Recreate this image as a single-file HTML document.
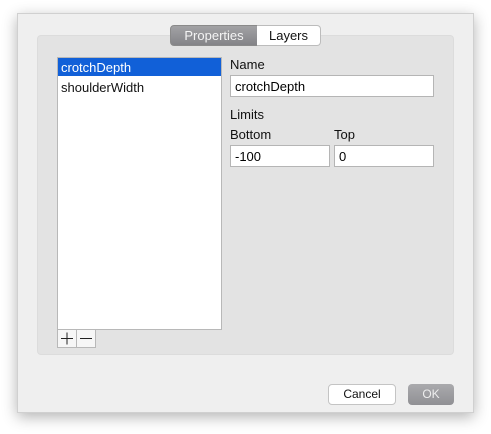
<!DOCTYPE html><html><head><style>
body{margin:0;width:491px;height:434px;background:#fff;font-family:"Liberation Sans",sans-serif;font-size:13px;position:relative;overflow:hidden}
.a{position:absolute;box-sizing:border-box}
.win{left:17px;top:13px;width:457px;height:400px;background:#efefef;border:1px solid #d0d0d0;box-shadow:0 4px 14px rgba(0,0,0,.3)}
.panel{left:37px;top:35px;width:417px;height:320px;background:#e3e3e3;border:1px solid #dcdcdc;border-radius:4px}
.t{line-height:15px;color:#111}
.fld{background:#fff;border:1px solid #b5b5b5;padding:3px 4px;line-height:15px}
</style></head><body>
<div class="a win"></div>
<div class="a panel"></div>
<div class="a" style="left:170px;top:25px;width:88px;height:21px;background:linear-gradient(#a2a2a5,#848488);border:1px solid #8a8a8a;border-radius:4px 0 0 4px;color:#f4f4f4;text-align:center;line-height:19px">Properties</div>
<div class="a" style="left:257px;top:25px;width:64px;height:21px;background:#fff;border:1px solid #bcbcbc;border-left:none;border-radius:0 4px 4px 0;color:#111;text-align:center;line-height:19px">Layers</div>
<div class="a" style="left:57px;top:57px;width:165px;height:273px;background:#fff;border:1px solid #b8b8b8"></div>
<div class="a" style="left:58px;top:58px;width:163px;height:18px;background:#1160d8;color:#fff;padding-left:3px;line-height:20px">crotchDepth</div>
<div class="a t" style="left:61px;top:80px">shoulderWidth</div>
<div class="a" style="left:57px;top:329px;width:20px;height:19px;background:#f6f6f6;border:1px solid #b8b8b8"><svg width="18" height="17" style="position:absolute;left:0;top:0"><path d="M3 8.5H15M9 2.5V14.5" stroke="#222" stroke-width="1"/></svg></div>
<div class="a" style="left:76px;top:329px;width:20px;height:19px;background:#f6f6f6;border:1px solid #b8b8b8"><svg width="18" height="17" style="position:absolute;left:0;top:0"><path d="M3 8.5H15" stroke="#222" stroke-width="1"/></svg></div>
<div class="a t" style="left:230px;top:57px">Name</div>
<div class="a fld" style="left:230px;top:75px;width:204px;height:22px">crotchDepth</div>
<div class="a t" style="left:230px;top:107px">Limits</div>
<div class="a t" style="left:230px;top:127px">Bottom</div>
<div class="a t" style="left:334px;top:127px">Top</div>
<div class="a fld" style="left:230px;top:145px;width:100px;height:22px">-100</div>
<div class="a fld" style="left:334px;top:145px;width:100px;height:22px">0</div>
<div class="a" style="left:328px;top:384px;width:68px;height:21px;background:#fff;border:1px solid #c4c4c4;border-radius:4px;text-align:center;line-height:19px;font-size:12px;color:#111">Cancel</div>
<div class="a" style="left:408px;top:384px;width:46px;height:21px;background:linear-gradient(#aaaaad,#909094);border-radius:4px;text-align:center;line-height:21px;font-size:12px;color:#eee">OK</div>
</body></html>
